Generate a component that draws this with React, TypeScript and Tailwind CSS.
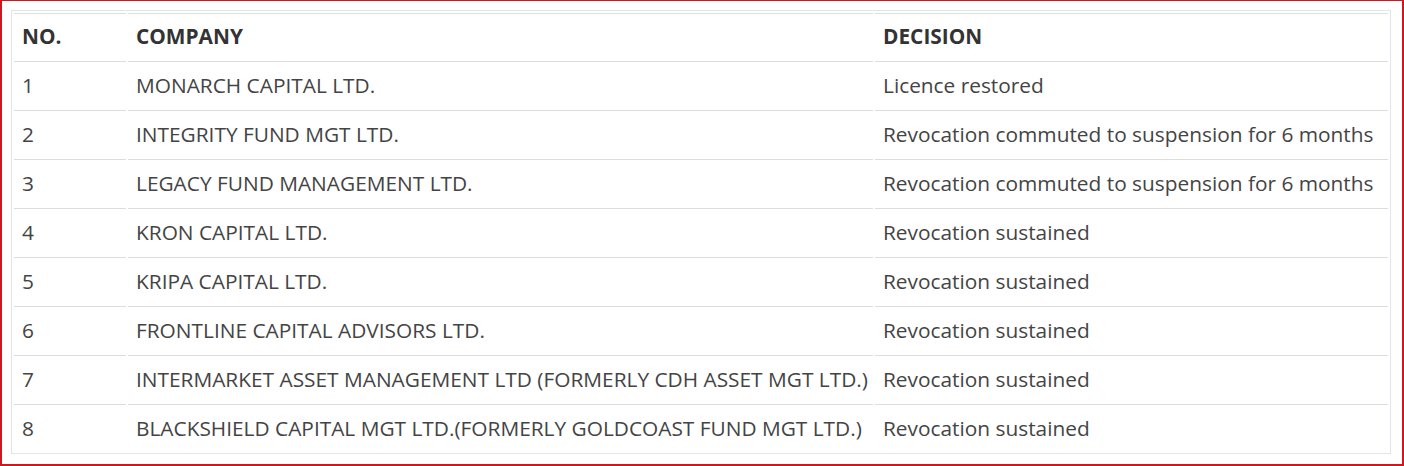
const rows: [string, string, string][] = [
  ["1", "MONARCH CAPITAL LTD.", "Licence restored"],
  ["2", "INTEGRITY FUND MGT LTD.", "Revocation commuted to suspension for 6 months"],
  ["3", "LEGACY FUND MANAGEMENT LTD.", "Revocation commuted to suspension for 6 months"],
  ["4", "KRON CAPITAL LTD.", "Revocation sustained"],
  ["5", "KRIPA CAPITAL LTD.", "Revocation sustained"],
  ["6", "FRONTLINE CAPITAL ADVISORS LTD.", "Revocation sustained"],
  ["7", "INTERMARKET ASSET MANAGEMENT LTD (FORMERLY CDH ASSET MGT LTD.)", "Revocation sustained"],
  ["8", "BLACKSHIELD CAPITAL MGT LTD.(FORMERLY GOLDCOAST FUND MGT LTD.)", "Revocation sustained"],
];

export default function App() {
  return (
    <div className="w-[1404px] h-[466px] bg-white border-2 border-t border-[#d0161e] pl-[9px] pt-[9px] font-['Open_Sans',sans-serif]">
      {/* decisions table */}
      <table className="w-[1380px] table-fixed border border-[#e4e2ea] border-separate border-spacing-[2px] text-[20.85px] leading-[30px] text-[#444]">
        <colgroup>
          <col className="w-[112px]" />
          <col className="w-[745px]" />
          <col />
        </colgroup>
        <thead>
          <tr>
            <th className="text-left font-bold text-[#333] pl-2 pr-1 pt-[7px] pb-2 border-t border-[#dddddd] whitespace-nowrap">NO.</th>
            <th className="text-left font-bold text-[#333] pl-2 pr-1 pt-[7px] pb-2 border-t border-[#dddddd] whitespace-nowrap">COMPANY</th>
            <th className="text-left font-bold text-[#333] pl-2 pr-1 pt-[7px] pb-2 border-t border-[#dddddd] whitespace-nowrap">DECISION</th>
          </tr>
        </thead>
        <tbody>
          {rows.map(([no, company, decision]) => (
            <tr key={no}>
              <td className="pl-2 pr-1 py-2 border-t border-[#dddddd] whitespace-nowrap">{no}</td>
              <td className="pl-2 pr-1 py-2 border-t border-[#dddddd] whitespace-nowrap">{company}</td>
              <td className="pl-2 pr-1 py-2 border-t border-[#dddddd] whitespace-nowrap">{decision}</td>
            </tr>
          ))}
        </tbody>
      </table>
    </div>
  );
}
